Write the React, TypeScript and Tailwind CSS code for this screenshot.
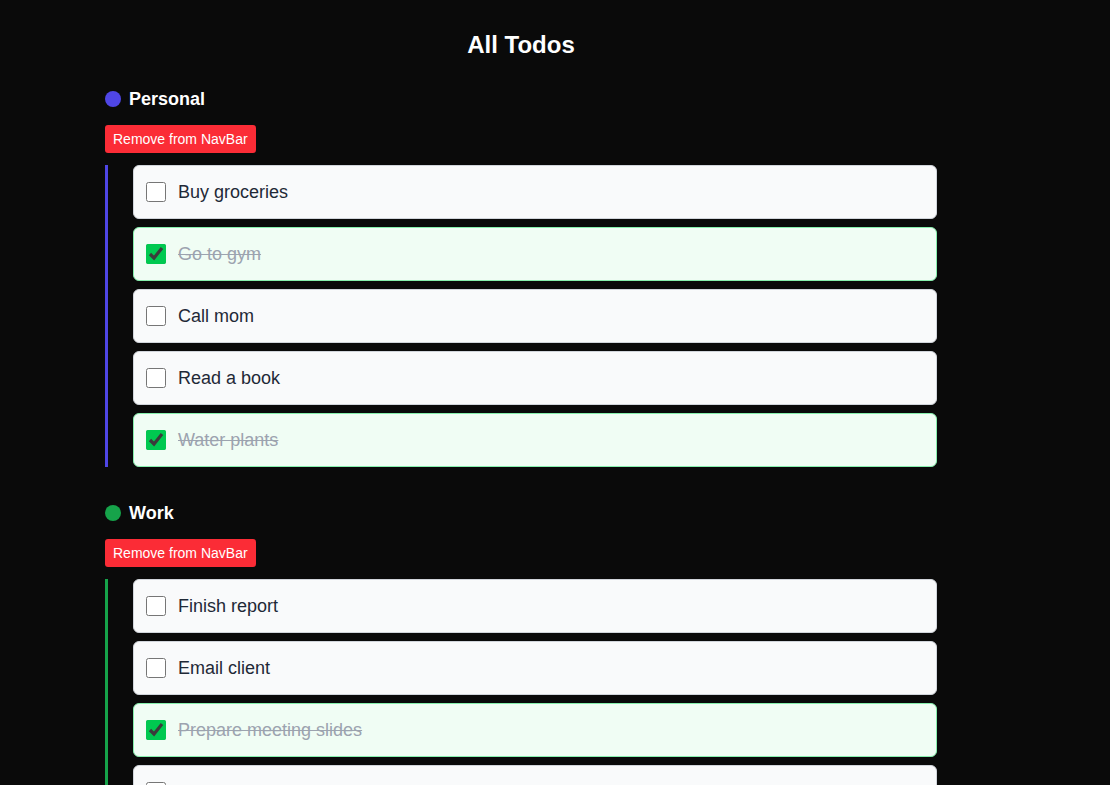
import React, { useState } from "react";

type Todo = { id: number; text: string; done: boolean };
type Group = { name: string; dot: string; bar: string; todos: Todo[] };

const initial: Group[] = [
  {
    name: "Personal",
    dot: "bg-[#4f46e5]",
    bar: "border-[#4f46e5]",
    todos: [
      { id: 1, text: "Buy groceries", done: false },
      { id: 2, text: "Go to gym", done: true },
      { id: 3, text: "Call mom", done: false },
      { id: 4, text: "Read a book", done: false },
      { id: 5, text: "Water plants", done: true },
    ],
  },
  {
    name: "Work",
    dot: "bg-[#16a34a]",
    bar: "border-[#16a34a]",
    todos: [
      { id: 6, text: "Finish report", done: false },
      { id: 7, text: "Email client", done: false },
      { id: 8, text: "Prepare meeting slides", done: true },
      { id: 9, text: "Review budget", done: false },
    ],
  },
];

export default function App() {
  const [groups, setGroups] = useState(initial);
  const toggle = (gi: number, id: number) =>
    setGroups((gs) =>
      gs.map((g, i) =>
        i !== gi ? g : { ...g, todos: g.todos.map((t) => (t.id === id ? { ...t, done: !t.done } : t)) }
      )
    );

  return (
    <div
      className="min-h-screen bg-[#0a0a0a] pb-10"
      style={{ fontFamily: '"Liberation Sans", Arial, sans-serif' }}
    >
      <div className="ml-[105px] w-[832px] pt-[29px]">
        <h1 className="h-8 text-center text-2xl leading-8 font-bold text-white">All Todos</h1>
        <div className="mt-[27px] flex flex-col gap-[35px]">
          {groups.map((g, gi) => (
            <section key={g.name}>
              <div className="flex h-[22px] items-center gap-2">
                <span className={`h-4 w-4 rounded-full ${g.dot}`} />
                <span className="text-lg leading-[22px] font-bold text-white">{g.name}</span>
              </div>
              <button className="mt-[15px] h-7 rounded-[3px] bg-[#fb2c36] px-2 text-sm text-white">
                Remove from NavBar
              </button>
              <ul className={`mt-3 flex flex-col gap-2 border-l-[3px] pl-[25px] ${g.bar}`}>
                {g.todos.map((t) => (
                  <li
                    key={t.id}
                    className={`flex h-[54px] items-center gap-3 rounded-md border px-3 ${
                      t.done ? "border-[#86efac] bg-[#f0fdf4]" : "border-[#d1d5db] bg-[#f9fafb]"
                    }`}
                  >
                    <input
                      type="checkbox"
                      checked={t.done}
                      onChange={() => toggle(gi, t.id)}
                      className="m-0 h-5 w-5 accent-[#00c950]"
                    />
                    <span
                      className={`text-lg ${
                        t.done ? "text-[#9ca3af] line-through" : "text-[#1f2937]"
                      }`}
                    >
                      {t.text}
                    </span>
                  </li>
                ))}
              </ul>
            </section>
          ))}
        </div>
      </div>
    </div>
  );
}
